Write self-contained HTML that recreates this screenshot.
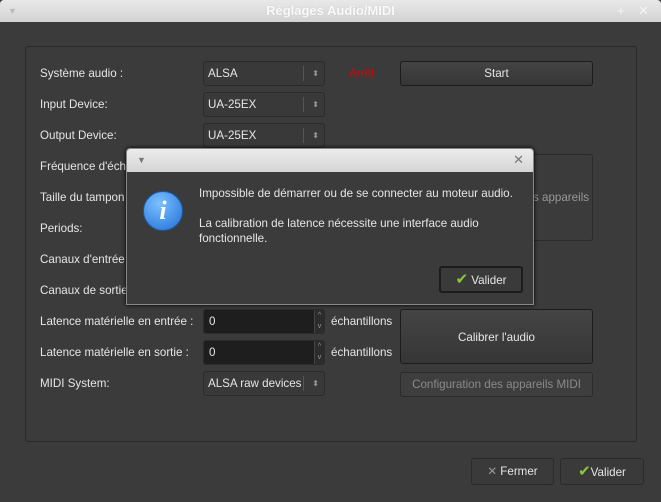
<!DOCTYPE html>
<html><head><meta charset="utf-8"><style>
*{box-sizing:border-box;margin:0;padding:0}
body{width:661px;height:502px;background:#3b3b3b;font-family:"Liberation Sans","DejaVu Sans",sans-serif;font-size:11.6px;color:#e6e6e6;position:relative;overflow:hidden}
.a{position:absolute}
.tb{left:0;top:0;width:661px;height:22px;background:linear-gradient(#e9e9e9,#d2d2d2);border-radius:4px 4px 0 0;text-align:center;line-height:22px;color:#fafafa;font-weight:bold;font-size:13px;text-shadow:0 0 1px #bbb}
.grp{left:25px;top:46px;width:612px;height:396px;border:1px solid #2a2a2a;border-radius:3px}
.lbl{left:40px;line-height:14px}
.cb{left:203px;width:122px;height:25px;background:#393939;border:1px solid #2b2b2b;border-radius:3px;padding-left:4px;line-height:24px}
.cb:after{content:"";position:absolute;right:20px;top:4px;height:15px;border-left:1px solid #555}
.cb span{position:absolute;right:5px;top:0;font-size:8px;color:#999}
.btn{background:linear-gradient(#444,#363636);border:1px solid #1c1c1c;border-radius:3px;text-align:center}
.sp{left:203px;width:122px;height:25px;background:#1e1e1e;border:1px solid #2b2b2b;border-radius:3px;padding-left:5px;line-height:24px}
.sp span{position:absolute;right:0;top:0;width:10px;height:23px;border-left:1px solid #444;background:#2c2c2c;font-size:7px;color:#999;text-align:center;line-height:11px}
</style></head><body>
<div class="a tb">Réglages Audio/MIDI</div>
<div class="a" style="left:8px;top:6px;color:#bbb;font-size:9px">▼</div>
<div class="a" style="left:617px;top:3px;color:#f5f5f5;font-size:13px">+</div>
<div class="a" style="left:638px;top:3px;color:#f5f5f5;font-size:13px">✕</div>
<div class="a grp"></div>

<div class="a lbl" style="top:67px">Système audio :</div>
<div class="a lbl" style="top:98px">Input Device:</div>
<div class="a lbl" style="top:129px">Output Device:</div>
<div class="a lbl" style="top:160px">Fréquence d'éch</div>
<div class="a lbl" style="top:191px">Taille du tampon</div>
<div class="a lbl" style="top:222px">Periods:</div>
<div class="a lbl" style="top:253px">Canaux d'entrée</div>
<div class="a lbl" style="top:284px">Canaux de sortie</div>
<div class="a lbl" style="top:315px">Latence matérielle en entrée :</div>
<div class="a lbl" style="top:346px">Latence matérielle en sortie :</div>
<div class="a lbl" style="top:377px">MIDI System:</div>

<div class="a cb" style="top:61px">ALSA<span>⬍</span></div>
<div class="a cb" style="top:92px">UA-25EX<span>⬍</span></div>
<div class="a cb" style="top:123px">UA-25EX<span>⬍</span></div>
<div class="a cb" style="top:371px">ALSA raw devices<span>⬍</span></div>
<div class="a sp" style="top:309px">0<span>^<br>v</span></div>
<div class="a sp" style="top:340px">0<span>^<br>v</span></div>
<div class="a" style="left:331px;top:315px">échantillons</div>
<div class="a" style="left:331px;top:346px">échantillons</div>
<div class="a" style="left:349px;top:67px;color:#e00000">Arrêt</div>
<div class="a btn" style="left:400px;top:61px;width:193px;height:25px;line-height:24px">Start</div>
<div class="a" style="left:533px;top:154px;width:60px;height:87px;border:1px solid #2b2b2b;border-left:none;border-radius:0 3px 3px 0"></div>
<div class="a" style="left:533px;top:191px;color:#999">s appareils</div>
<div class="a btn" style="left:400px;top:309px;width:193px;height:55px;line-height:55px">Calibrer l'audio</div>
<div class="a" style="left:400px;top:372px;width:193px;height:25px;line-height:23px;border:1px solid #2b2b2b;border-radius:3px;background:#3e3e3e;text-align:center;color:#8a8a8a">Configuration des appareils MIDI</div>

<div class="a btn" style="left:471px;top:458px;width:83px;height:27px;line-height:25px;background:#3a3a3a;border-color:#2b2b2b"><span style="color:#999">✕</span> Fermer</div>
<div class="a btn" style="left:560px;top:458px;width:84px;height:27px;line-height:25px;background:#3a3a3a;border-color:#2b2b2b"><span style="color:#8cc63f;font-weight:bold;font-size:15px">✔</span>Valider</div>

<div class="a" style="left:126px;top:148px;width:408px;height:157px;background:#3b3b3b;border:1px solid #888;border-radius:4px 4px 0 0;box-shadow:0 0 4px #000">
 <div style="height:23px;background:linear-gradient(#ececec,#d4d4d4);border-radius:3px 3px 0 0;position:relative">
  <span class="a" style="left:10px;top:6px;font-size:9px;color:#777">▼</span>
  <span class="a" style="right:9px;top:3px;font-size:13px;color:#777">✕</span>
 </div>
 <div class="a" style="left:16px;top:42px;width:40px;height:40px;border-radius:50%;background:radial-gradient(circle at 40% 30%,#7cc0ff,#1f6fd6);border:1px solid #1b5aa8;color:#fff;font:italic bold 26px 'Liberation Serif',serif;text-align:center;line-height:38px">i</div>
 <div class="a" style="left:72px;top:37px;line-height:15px">Impossible de démarrer ou de se connecter au moteur audio.</div>
 <div class="a" style="left:72px;top:67px;line-height:15px">La calibration de latence nécessite une interface audio<br>fonctionnelle.</div>
 <div class="a btn" style="left:312px;top:117px;width:84px;height:27px;line-height:23px;border:2px solid #1c1c1c;background:#3a3a3a"><span style="color:#8cc63f;font-weight:bold;font-size:15px">✔</span> Valider</div>
</div>
</body></html>
